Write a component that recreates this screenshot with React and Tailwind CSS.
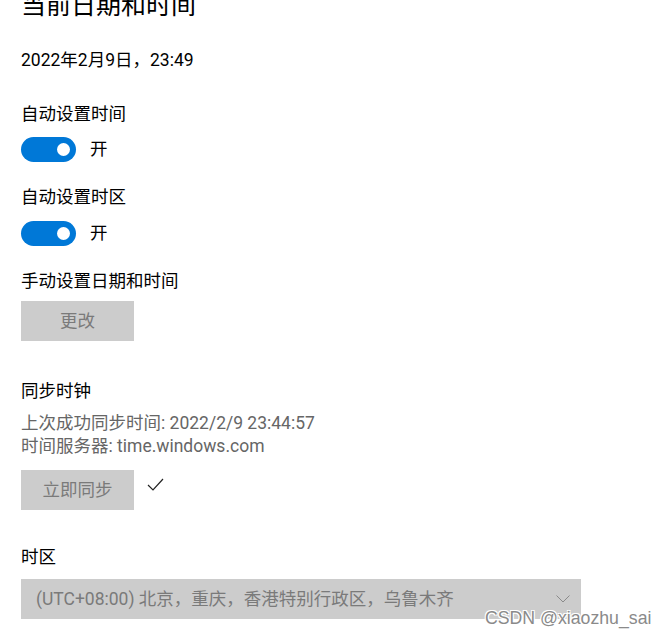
import React from "react";

const font = { fontFamily: 'Roboto, "Noto Sans CJK SC", sans-serif' };

const Toggle = ({ label }) => {
  return (
    <div className="flex items-center h-[25px]">
      <div className="w-[55px] h-[25px] rounded-full bg-[#0078d7] flex items-center justify-end pr-[6px]">
        <div className="w-[13px] h-[13px] rounded-full bg-white"></div>
      </div>
      <span className="ml-[14px] text-[17.5px] leading-[25px] text-black">{label}</span>
    </div>
  );
};

const GrayButton = ({ children }) => {
  return (
    <button className="w-[113px] h-[40px] bg-[#cccccc] text-[17.5px] text-[#7a7a7a] flex items-center justify-center">
      {children}
    </button>
  );
};

export default function App() {
  return (
    <div className="relative w-full h-[637px] overflow-hidden bg-white" style={font}>
      <div className="pl-[21px] flex flex-col text-black">
        <h1 className="mt-[-10px] text-[25px] leading-[32px] font-normal">当前日期和时间</h1>

        <p className="mt-[26px] text-[17.5px] leading-[24px]">2022年2月9日，23:49</p>

        <p className="mt-[30px] text-[17.5px] leading-[24px]">自动设置时间</p>
        <div className="mt-[11px]">
          <Toggle label="开" />
        </div>

        <p className="mt-[23px] text-[17.5px] leading-[24px]">自动设置时区</p>
        <div className="mt-[12px]">
          <Toggle label="开" />
        </div>

        <p className="mt-[23px] text-[17.5px] leading-[24px]">手动设置日期和时间</p>
        <div className="mt-[8px]">
          <GrayButton>更改</GrayButton>
        </div>

        <p className="mt-[38px] text-[17.5px] leading-[24px]">同步时钟</p>
        <div className="mt-[9px] text-[17.5px] leading-[23px] text-[#666666]">
          <p>上次成功同步时间: 2022/2/9 23:44:57</p>
          <p>时间服务器: time.windows.com</p>
        </div>
        <div className="mt-[12px] flex items-start">
          <GrayButton>立即同步</GrayButton>
          <svg className="ml-[13px] mt-[8px]" width="17" height="13" viewBox="0 0 17 13" fill="none">
            <polyline points="1,7 6,12 16,1" stroke="#222" strokeWidth="1.2" />
          </svg>
        </div>

        <p className="mt-[35px] text-[17.5px] leading-[24px]">时区</p>
        <div className="mt-[10px] w-[560px] h-[40px] bg-[#cccccc] flex items-center justify-between pl-[15px] pr-[11px]">
          <span className="text-[17.5px] text-[#7a7a7a]">(UTC+08:00) 北京，重庆，香港特别行政区，乌鲁木齐</span>
          <svg width="14" height="8" viewBox="0 0 14 8" fill="none">
            <polyline points="0.5,0.5 7,7 13.5,0.5" stroke="#8a8a8a" strokeWidth="1" />
          </svg>
        </div>
      </div>

      <div className="absolute left-[485px] top-[610px] text-[17.7px] leading-none text-[#8a8a8a] font-['Liberation_Sans',Arial,sans-serif] [text-shadow:1px_1px_0_#fff,-1px_-1px_0_#fff,1px_-1px_0_#fff,-1px_1px_0_#fff]">
        CSDN @xiaozhu_sai
      </div>
    </div>
  );
}
